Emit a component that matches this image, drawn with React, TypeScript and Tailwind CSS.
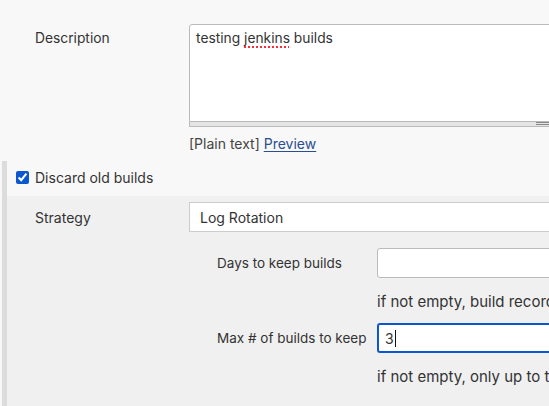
import React from 'react';

const App = () => {
  return (
    <div className="h-[406px] w-full overflow-hidden bg-[#f8f8f8] text-[#333] font-['Inter',sans-serif]">
      {/* description */}
      <div className="flex pt-6">
        <div className="w-[189px] shrink-0 pl-[35px] pt-[4px] text-[13.8px]">Description</div>
        <div className="w-[420px] shrink-0">
          <div className="h-[98px] rounded-t-[3px] border border-[#bbb] bg-white px-[6px] py-[3px] text-[13.8px]">
            testing{' '}
            <span className="underline decoration-dotted decoration-red-500 decoration-2 underline-offset-[3px]">jenkins</span>{' '}
            builds
          </div>
          <div className="flex h-[5px] justify-end border border-t-0 border-[#bbb] bg-[#e4e4e4]">
            <div className="mr-8 h-[3px] w-[40px] border-y border-[#888]"></div>
          </div>
          <div className="pt-[6px] text-[14px] text-[#444]">
            [Plain text]{' '}
            <a href="#" className="text-[#2a4f91] underline underline-offset-2">
              Preview
            </a>
          </div>
        </div>
      </div>

      {/* discard old builds */}
      <div className="ml-[2px] mt-[7px] border-l-[5px] border-[#dcdcdc]">
        <div className="flex h-[35px] items-center pb-[3px] pl-[9px]">
          <input type="checkbox" defaultChecked className="h-[13px] w-[13px] accent-[#0b57d0]" />
          <span className="pl-[6px] text-[14px]">Discard old builds</span>
        </div>
        <div className="bg-[#f0f0f0] pt-[6px] pb-8">
          <div className="flex items-center">
            <div className="w-[182px] shrink-0 pl-[28px] text-[14px]">Strategy</div>
            <div className="flex h-[30px] w-[420px] shrink-0 items-center border border-[#ccc] bg-white pl-[10px] text-[14px]">
              Log Rotation
            </div>
          </div>

          <div className="mt-4 flex items-center">
            <div className="w-[370px] shrink-0 pl-[210px] text-[13.5px]">Days to keep builds</div>
            <div className="h-[30px] w-[260px] shrink-0 rounded-[3px] border border-[#bbb] bg-white"></div>
          </div>
          <div className="pl-[370px] pt-[12px] text-[15px] leading-[24px] whitespace-nowrap">
            if not empty, build records are only kept up to this number of days
          </div>

          <div className="mt-[9px] flex items-center">
            <div className="w-[370px] shrink-0 pl-[210px] text-[13.5px] whitespace-nowrap">Max # of builds to keep</div>
            <div className="flex h-[30px] w-[260px] shrink-0 items-center rounded-[3px] border-2 border-[#0b57d0] bg-white pl-[6px] text-[14px]">
              3<span className="ml-[1px] inline-block h-[17px] w-px bg-[#111]"></span>
            </div>
          </div>
          <div className="pl-[370px] pt-[12px] text-[15px] leading-[24px] whitespace-nowrap">
            if not empty, only up to this number of build records are kept
          </div>
        </div>
      </div>
    </div>
  );
};

export default App;
